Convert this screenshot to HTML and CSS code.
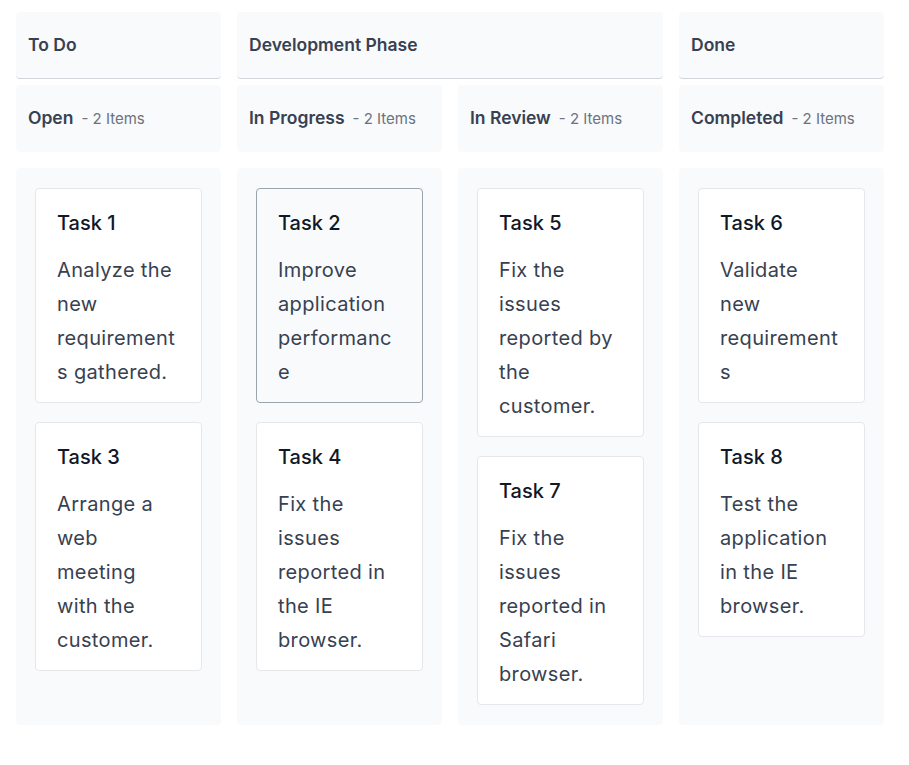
FILE: index.html
```html
<!DOCTYPE html>
<html>
<head>
  <meta charset="UTF-8">
  <title>Kanban</title>
  <link rel="stylesheet" href="styles.css">
</head>
<body>
<div class="kanban">
  <!-- stacked headers -->
  <div class="stack-row">
    <div class="stack-cell">To Do</div>
    <div class="stack-cell span2">Development Phase</div>
    <div class="stack-cell">Done</div>
  </div>
  <div class="header-row">
    <div class="header-cell"><span class="header-text">Open</span><span class="item-count">- 2 Items</span></div>
    <div class="header-cell"><span class="header-text">In Progress</span><span class="item-count">- 2 Items</span></div>
    <div class="header-cell"><span class="header-text">In Review</span><span class="item-count">- 2 Items</span></div>
    <div class="header-cell"><span class="header-text">Completed</span><span class="item-count">- 2 Items</span></div>
  </div>
  <div class="content-row">
    <div class="column">
      <div class="card">
        <div class="card-title">Task 1</div>
        <div class="card-body">Analyze the new requirements gathered.</div>
      </div>
      <div class="card">
        <div class="card-title">Task 3</div>
        <div class="card-body">Arrange a web meeting with the customer.</div>
      </div>
    </div>
    <div class="column">
      <div class="card selected">
        <div class="card-title">Task 2</div>
        <div class="card-body">Improve application performance</div>
      </div>
      <div class="card">
        <div class="card-title">Task 4</div>
        <div class="card-body">Fix the issues reported in the IE browser.</div>
      </div>
    </div>
    <div class="column">
      <div class="card">
        <div class="card-title">Task 5</div>
        <div class="card-body">Fix the issues reported by the customer.</div>
      </div>
      <div class="card">
        <div class="card-title">Task 7</div>
        <div class="card-body">Fix the issues reported in Safari browser.</div>
      </div>
    </div>
    <div class="column">
      <div class="card">
        <div class="card-title">Task 6</div>
        <div class="card-body">Validate new requirements</div>
      </div>
      <div class="card">
        <div class="card-title">Task 8</div>
        <div class="card-body">Test the application in the IE browser.</div>
      </div>
    </div>
  </div>
</div>
</body>
</html>
```

FILE: styles.css
```css
* {
  margin: 0;
  padding: 0;
  box-sizing: border-box;
}
body {
  background: #fff;
  font-family: Inter, "Noto Sans", sans-serif;
  color: #374151;
}
.kanban {
  width: 868px;
  margin: 12px 0 0 16px;
}
.stack-row,
.header-row,
.content-row {
  display: grid;
  grid-template-columns: repeat(4, minmax(0, 1fr));
  column-gap: 16px;
}
.stack-cell {
  height: 67px;
  line-height: 66px;
  padding: 0 12px;
  background: #f9fafb;
  border-bottom: 1px solid #d1d5db;
  border-radius: 4px;
  font-size: 17.5px;
  font-weight: 600;
  color: #374151;
}
.stack-cell.span2 {
  grid-column: span 2;
}
.header-row {
  margin-top: 6px;
}
.header-cell {
  height: 67px;
  line-height: 66px;
  padding: 0 12px;
  background: #f9fafb;
  border-radius: 4px;
  white-space: nowrap;
}
.header-text {
  font-size: 17.5px;
  font-weight: 600;
  color: #374151;
}
.item-count {
  margin-left: 8px;
  font-size: 15px;
  color: #6b7280;
}
.content-row {
  margin-top: 16px;
}
.column {
  background: #f9fafb;
  padding: 20px 19px;
  display: flex;
  flex-direction: column;
  gap: 19px;
  border-radius: 4px;
}
.card {
  background: #fff;
  border: 1px solid #e5e7eb;
  border-radius: 4px;
  padding: 20px 23px 13px 21px;
}
.card.selected {
  border-color: #9ca3af;
  background: #f9fafb;
}
.card-title {
  font-size: 20px;
  font-weight: 500;
  line-height: 28px;
  color: #111827;
  margin-bottom: 16px;
}
.card-body {
  font-size: 20px;
  line-height: 34px;
  letter-spacing: 0.35px;
  color: #374151;
  overflow-wrap: break-word;
}
```
